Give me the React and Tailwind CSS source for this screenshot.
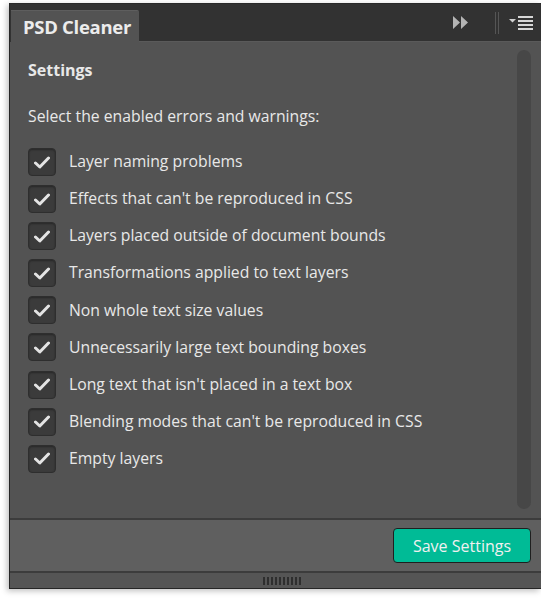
import React, { useState } from 'react';

const ITEMS = [
  'Layer naming problems',
  "Effects that can't be reproduced in CSS",
  'Layers placed outside of document bounds',
  'Transformations applied to text layers',
  'Non whole text size values',
  'Unnecessarily large text bounding boxes',
  "Long text that isn't placed in a text box",
  "Blending modes that can't be reproduced in CSS",
  'Empty layers',
];

function Check({ checked, onClick }) {
  return (
    <button
      type="button"
      onClick={onClick}
      className="w-[28px] h-[28px] shrink-0 rounded-[4px] bg-[#3b3b3b] border border-[#2e2e2e] shadow-[inset_0_1px_2px_rgba(0,0,0,0.35)] flex items-center justify-center"
    >
      {checked && (
        <svg width="16" height="13" viewBox="0 0 16 13">
          <path d="M1.5 7 L5.8 11 L14.5 2" fill="none" stroke="#e4e4e4" strokeWidth="3" strokeLinecap="round" strokeLinejoin="round" />
        </svg>
      )}
    </button>
  );
}

export default function App() {
  const [checked, setChecked] = useState(ITEMS.map(() => true));

  return (
    <div className="w-[541px] h-[600px] bg-white pt-[3px] pl-[9px]" style={{ fontFamily: '"Open Sans", "Noto Sans", sans-serif' }}>
      <div className="h-[586px] flex flex-col bg-[#535353] border-l border-b border-[#262626] shadow-[-2px_2px_6px_rgba(0,0,0,0.25)]">
        {/* tab strip */}
        <div className="h-[39px] shrink-0 bg-[#323232] flex items-end border-t border-[#2a2a2a]">
          <div className="h-[32px] w-[128px] ml-[1px] bg-[#535353] rounded-tr-[2px] border-t border-[#5e5e5e] flex items-center pl-[12px]">
            <span className="text-[18.5px] font-bold text-[#ececec] tracking-[-0.3px]">PSD Cleaner</span>
          </div>
          <div className="flex-1 h-full flex items-center justify-end pr-[8px] border-b border-[#5a5a5a]">
            <svg width="16" height="13" viewBox="0 0 16 13" className="mr-[26px]">
              <path d="M0 0 L7 6.5 L0 13 Z M8 0 L15 6.5 L8 13 Z" fill="#b4b4b4" />
            </svg>
            <div className="flex gap-[2px] h-[22px] mr-[10px]">
              <div className="w-[1px] bg-[#555]" />
              <div className="w-[1px] bg-[#555]" />
            </div>
            <svg width="24" height="16" viewBox="0 0 24 16">
              <path d="M0 4 L7 4 L3.5 7.5 Z" fill="#d0d0d0" />
              <rect x="9" y="1" width="15" height="2" fill="#d6d6d6" />
              <rect x="9" y="5" width="15" height="2" fill="#d6d6d6" />
              <rect x="9" y="9" width="15" height="2" fill="#d6d6d6" />
              <rect x="9" y="13" width="15" height="2" fill="#d6d6d6" />
            </svg>
          </div>
        </div>

        {/* content */}
        <div className="flex-1 flex min-h-0">
          <div className="flex-1 pl-[18px] pt-[18px] text-[#e8e8e8]">
            <div className="text-[16px] font-bold leading-[20px]">Settings</div>
            <div className="mt-[26px] text-[15.75px] leading-[20px]">Select the enabled errors and warnings:</div>
            <div className="mt-[22px] flex flex-col gap-[9.1px]">
              {ITEMS.map((label, i) => (
                <div key={label} className="flex items-center h-[28px]">
                  <Check
                    checked={checked[i]}
                    onClick={() => setChecked((c) => c.map((v, j) => (j === i ? !v : v)))}
                  />
                  <span className="ml-[13px] text-[15.75px]">{label}</span>
                </div>
              ))}
            </div>
          </div>
          <div className="w-[24px] shrink-0 pt-[8px] pb-[9px] flex justify-start">
            <div className="w-[14px] h-full rounded-full bg-[#474747]" />
          </div>
        </div>

        {/* footer */}
        <div className="h-[53px] shrink-0 bg-[#5f5f5f] border-t-2 border-[#3c3c3c] flex items-center justify-end pr-[10px]">
          <button
            type="button"
            className="h-[35px] w-[138px] rounded-[4px] bg-[#00bb96] border border-[#1f1f1f] text-[16px] text-[#f0f0f0]"
          >
            Save Settings
          </button>
        </div>

        {/* bottom grip bar */}
        <div className="h-[17px] shrink-0 bg-[#555] border-t-2 border-[#3c3c3c] flex items-center justify-center pr-[8px]">
          <div className="flex gap-[2px] ml-[20px]">
            {Array.from({ length: 10 }).map((_, i) => (
              <div key={i} className="w-[2px] h-[8px] bg-[#2e2e2e]" />
            ))}
          </div>
        </div>
      </div>
    </div>
  );
}
